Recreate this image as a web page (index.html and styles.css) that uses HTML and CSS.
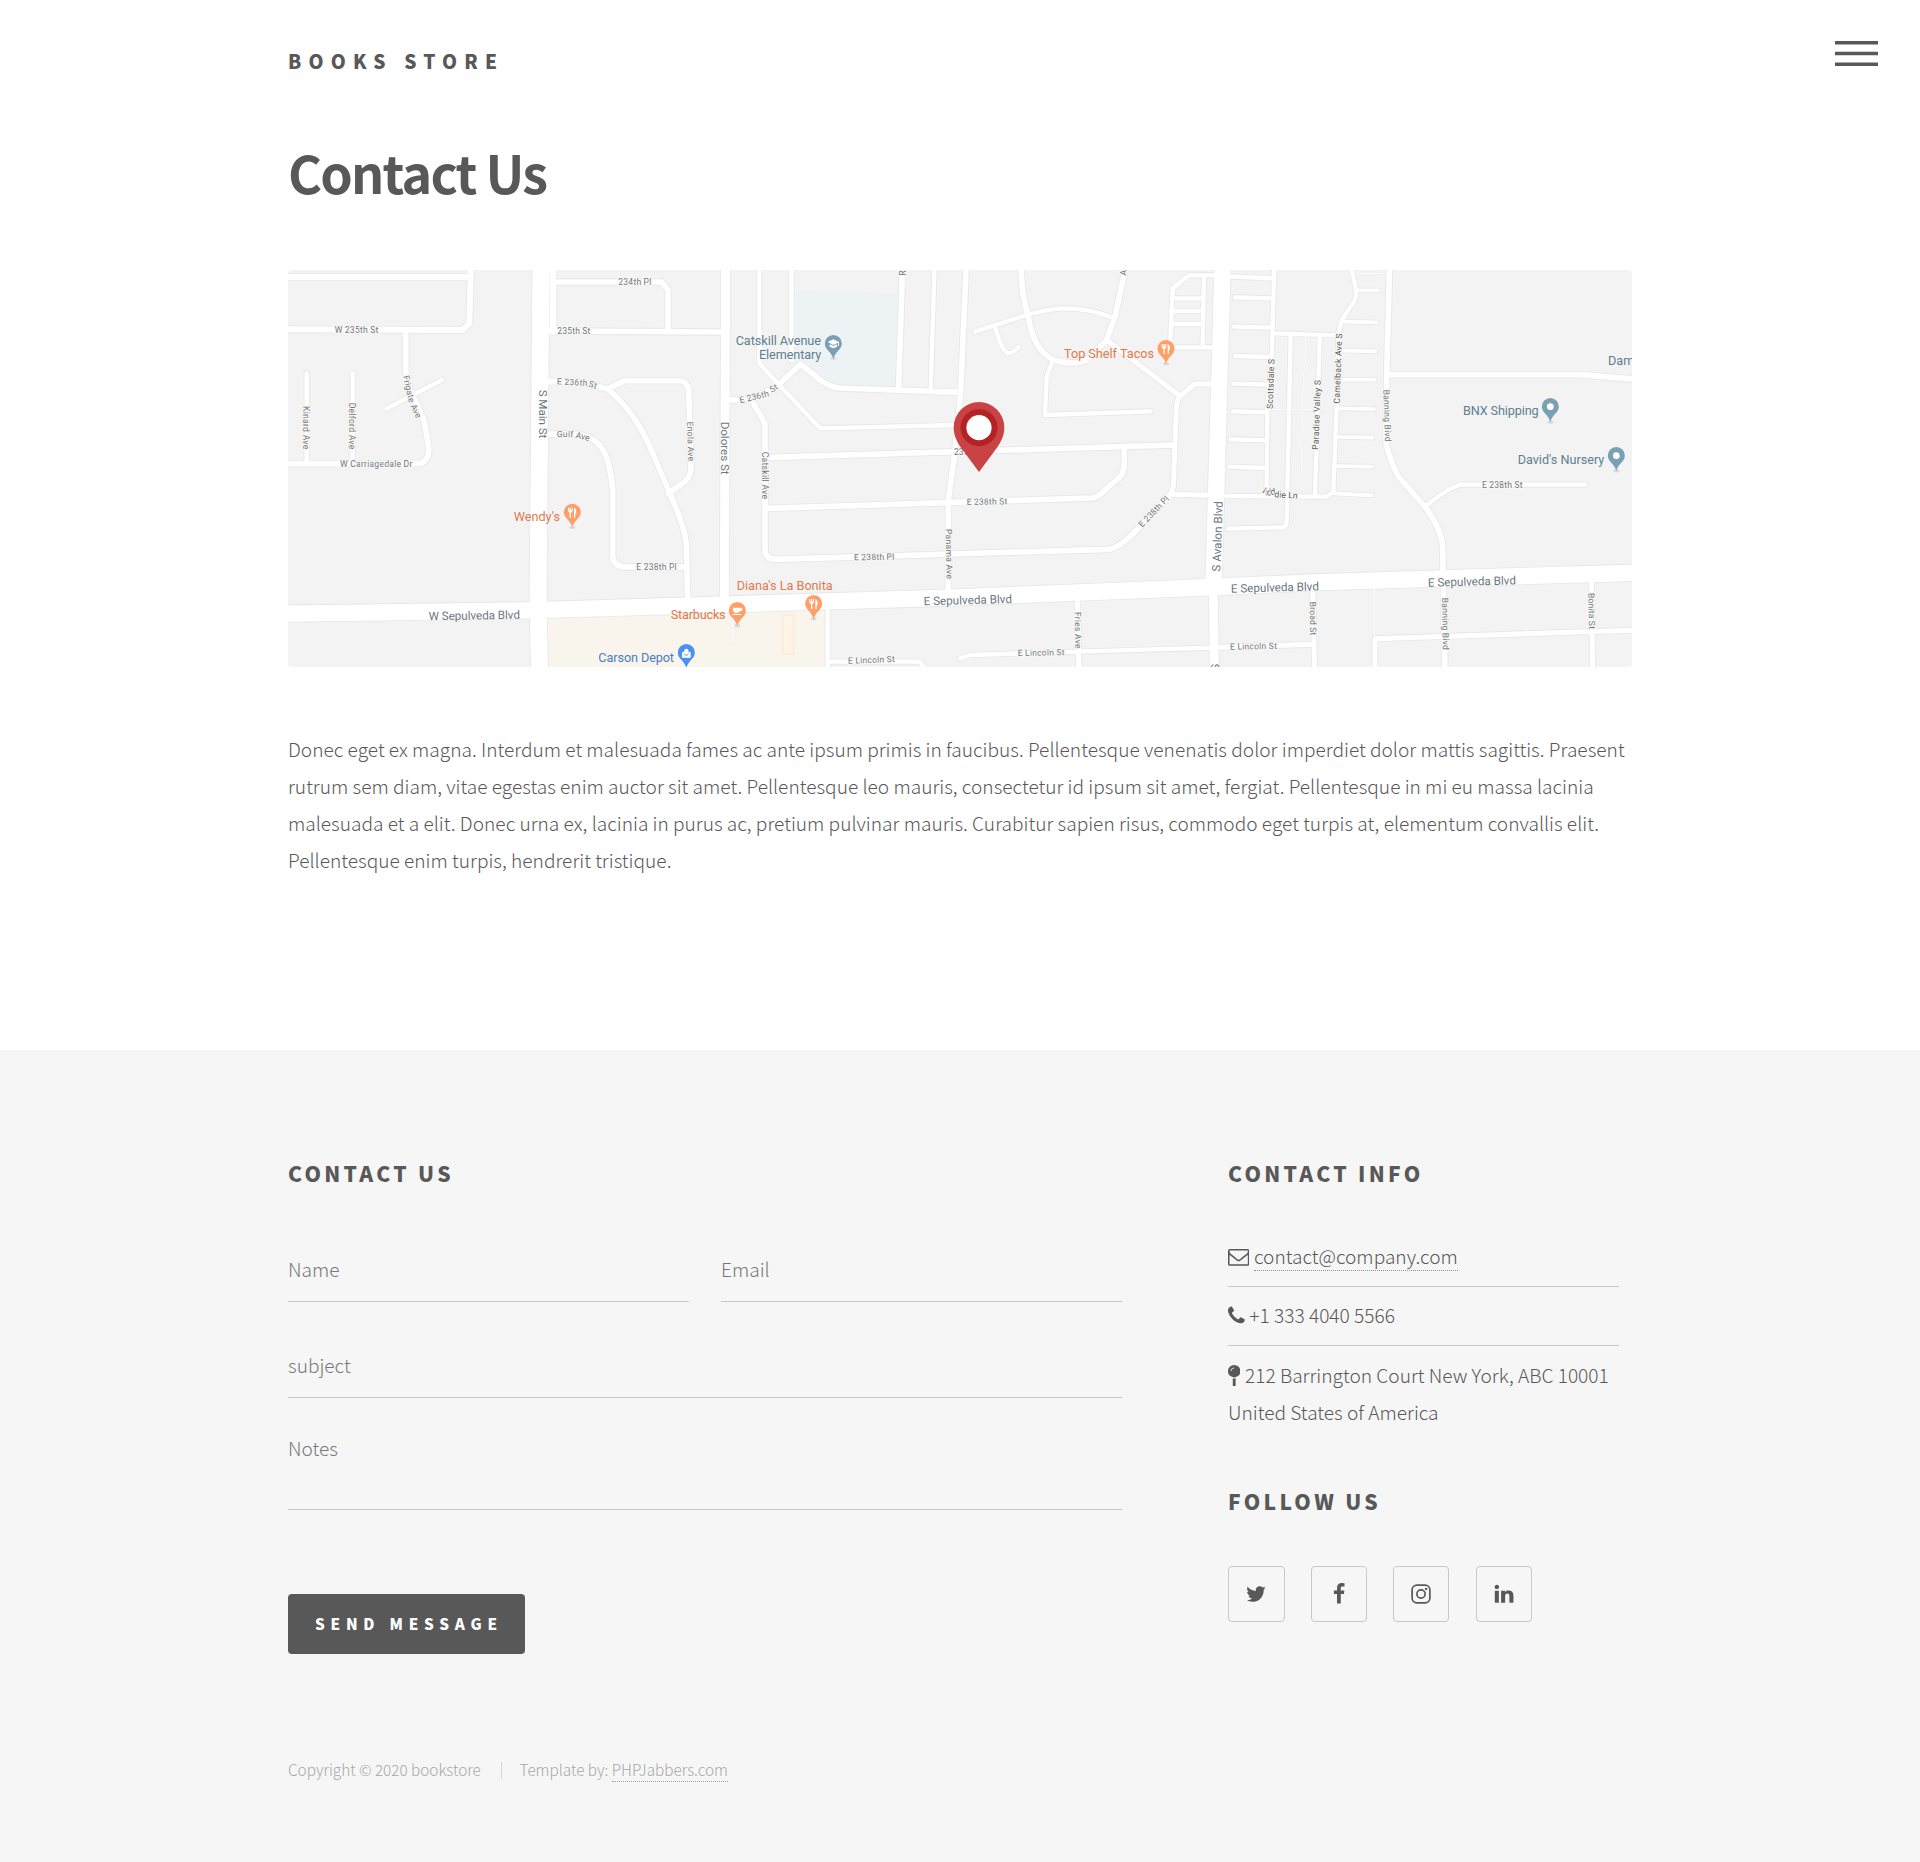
FILE: index.html
```html
<!DOCTYPE html>
<html lang="en">
<head>
<meta charset="utf-8">
<title>Books Store - Contact Us</title>
<link rel="stylesheet" href="styles.css">
</head>
<body>
<header class="header">
  <div class="inner header-inner"><a class="logo" href="#">BOOKS STORE</a></div>
  <button class="menu" aria-label="Menu">
    <svg width="43" height="26" viewBox="0 0 43 26"><path d="M0 1.7H43M0 12.5H43M0 23.3H43" stroke="#585858" stroke-width="3.4"/></svg>
  </button>
</header>
<main class="main inner">
  <h1>Contact Us</h1>
  <svg class="map" viewBox="288 270 1344 397" width="1344" height="397">
    <defs>
      <g id="roads">
        <g transform="translate(280 260) scale(.33333)">
          <path class="w18" d="M10 51H565M573 10L568 190L548 210L10 208"/>
          <path class="w16" d="M377 215V330Q380 370 400 410L432 480L446 560Q448 608 415 611H10"/>
          <path class="w12" d="M320 446L486 360M80 340V605M218 340V605"/>
          <path class="w52" d="M783 10L774 1030L779 1240"/>
          <path class="w20" d="M819 10V215"/>
          <path class="w16" d="M830 66H1145L1164 90V210M805 213L1330 216"/>
          <path class="w28" d="M1337 10L1333 1020"/>
          <path class="w16" d="M805 365H900L985 388Q1060 450 1110 560L1165 690Q1215 800 1219 850L1223 1020M985 385L1035 362H1200Q1222 365 1226 390L1230 520L1233 630Q1228 655 1215 665L1165 700M805 522H890Q950 530 975 580Q992 620 998 690V890Q1000 920 1035 921H1220"/>
          <path class="w50" d="M10 1061L750 1051L1350 1033L2010 1013L2730 984L3100 967L4070 938"/>
        </g>
        <g transform="translate(730 260) scale(.33333)">
          <path class="w12" d="M88 10V310L145 372L270 505L680 495M614 10L602 388"/>
          <path class="w14" d="M184 10V300"/>
          <path class="w16" d="M0 420Q80 420 145 375L212 312L270 360Q300 382 330 384L690 397M517 45L506 383"/>
          <path class="w16" d="M709 10L692 400L672 600L655 720V985"/>
          <path class="w16" d="M70 430L105 490V870Q106 897 135 898L1135 868Q1165 865 1215 815L1322 703M120 592L1330 555M112 745L1085 714Q1100 712 1115 700L1175 645Q1183 630 1183 600V565"/>
          <path class="w16" d="M873 10Q873 100 895 170Q910 270 970 300Q1030 318 1070 300L1130 240L1155 170L1182 45"/>
          <path class="w12" d="M735 215L890 165Q960 145 1000 145Q1080 145 1145 172M795 200Q815 275 835 280Q845 280 865 262M968 302L950 350L945 465L1262 454"/>
          <path class="w14" d="M1130 240L1350 408L1395 372Q1410 372 1445 372M1350 408Q1338 420 1338 480L1330 680L1322 703L1440 706"/>
          <path class="w12" d="M1455 46H1378L1328 85L1320 262H1445M1422 46L1418 262M1325 115H1415M1322 153H1415M1322 192H1415"/>
          <path class="w16" d="M1042 1020L1047 1240"/>
          <path class="w12" d="M300 1205H570L590 1235M690 1195L720 1185L1040 1175L1450 1163"/>
          <path class="w12" d="M293 1040V1240"/>
          <path class="w5" d="M10 1080V1150"/>
        </g>
        <g transform="translate(1180 260) scale(.33333)">
          <path class="w50" d="M128 10L101 960"/>
          <path class="w28" d="M100 960L103 1240"/>
          <path class="w12" d="M150 50L283 55M283 10L275 290L262 450L260 690M165 112L275 115M162 200L275 203M165 288L270 291M160 371L265 374M158 454L262 457M152 538L262 541M148 620L258 624"/>
          <path class="w12" d="M135 708L440 710L460 695L470 440L475 220L485 180L525 120Q535 90 508 10M283 220L475 226"/>
          <path class="w12" d="M332 228L320 790Q318 802 305 802L145 806M419 228L405 705"/>
          <path class="w3" d="M375 228L378 290L370 350L362 700M262 448H400M520 40H605V20M584 985V1130"/>
          <path class="w10" d="M530 91H595M490 185L590 187M488 272L588 274M480 359H585M470 445L582 447M470 531L578 533M465 618L576 620M460 700L574 706"/>
          <path class="w16" d="M629 10L620 350L618 550Q630 600 655 650L735 740Q785 810 788 860L795 1240M625 344H1200L1370 358"/>
          <path class="w12" d="M735 740Q820 672 850 674H1215"/>
          <path class="w14" d="M115 1162L400 1153M398 980L404 1240M585 1240V1136L1370 1110M1235 965L1238 1240"/>
        </g>
      </g>
      <g id="pin">
        <path d="M0 -52A25.500 25.500 0 0 1 25.500 -26C25.500 -8 6 -4 0 20C-6 -4 -25.500 -8 -25.500 -26A25.500 25.500 0 0 1 0 -52Z"/>
      </g>
      <path id="fork" d="M-13 -40V-31Q-12 -26 -8 -25V-10H-4V-25Q0 -26 1 -31V-40H-2V-32H-4V-40H-8V-32H-10V-40ZM5 -10V-40Q13 -37 12 -23H9V-10Z" fill="#fff"/>
    </defs>
    <rect x="288" y="270" width="1344" height="397" fill="#f3f3f3"/>
    <path fill="#edf2f5" d="M796 291L898 293L897 387L840 385L820 377L796 357Z"/>
    <path fill="#f9f5ed" d="M548 618L826 608V667H548Z"/>
    <use href="#roads" class="casing"/>
    <use href="#roads" class="surface"/>
    <path fill="#fef5e7" stroke="#f8e6cb" stroke-width=".8" d="M783 615H793.500V654H783Z"/>

    <g class="street" transform="translate(280 260) scale(.33333)">
      <text x="164" y="220" textLength="131">W 235th St</text>
      <text x="1015" y="76" textLength="99">234th Pl</text>
      <text x="832" y="221" textLength="99">235th St</text>
      <text x="180" y="621" textLength="217">W Carriagedale Dr</text>
      <text x="1069" y="931" textLength="121">E 238th Pl</text>
      <text transform="translate(830 373) rotate(3)" textLength="92">E 236th</text>
      <text transform="translate(924 379) rotate(17)" textLength="25">St</text>
      <text transform="translate(830 531) rotate(1)" textLength="50">Gulf</text>
      <text transform="translate(886 533) rotate(14)" textLength="42">Ave</text>
      <text transform="translate(70 438) rotate(90)" textLength="130">Kinard Ave</text>
      <text transform="translate(208 428) rotate(90)" textLength="140">Delford Ave</text>
      <text transform="translate(369 349) rotate(77)" textLength="82">Frigate</text>
      <text transform="translate(391 438) rotate(64)" textLength="42">Ave</text>
      <text transform="translate(1221 485) rotate(88)" textLength="119">Enola Ave</text>
      <g class="major">
        <text transform="translate(777 389) rotate(90)" textLength="146">S Main St</text>
        <text transform="translate(1323 485) rotate(90)" textLength="159">Dolores St</text>
        <text transform="translate(446 1081) rotate(-1)" textLength="274">W Sepulveda Blvd</text>
      </g>
    </g>
    <g class="street" transform="translate(730 260) scale(.33333)">
      <text transform="translate(31 430) rotate(-14)" textLength="90">E 236th</text>
      <text transform="translate(125 398) rotate(-30)" textLength="24">St</text>
      <text transform="translate(96 575) rotate(90)" textLength="142">Catskill Ave</text>
      <text transform="translate(647 807) rotate(89)" textLength="150">Panama Ave</text>
      <text transform="translate(710 735) rotate(-1)" textLength="122">E 238th St</text>
      <text transform="translate(372 901) rotate(-1)" textLength="121">E 238th Pl</text>
      <text transform="translate(1237 803) rotate(-46)" textLength="118">E 238th Pl</text>
      <text x="672" y="585">237th St</text>
      <text transform="translate(1034 1056) rotate(89)" textLength="110">Fries Ave</text>
      <text transform="translate(354 1211) rotate(-2)" textLength="141">E Lincoln St</text>
      <text transform="translate(863 1188) rotate(-1)" textLength="141">E Lincoln St</text>
      <text transform="translate(527 47) rotate(-90)">R</text>
      <text transform="translate(1188 47) rotate(-84)">A</text>
      <g class="major"><text transform="translate(581 1036) rotate(-1.500)" textLength="265">E Sepulveda Blvd</text></g>
    </g>
    <g class="street" transform="translate(1180 260) scale(.33333)">
      <g class="brown">
        <text transform="translate(278 447) rotate(-88)" textLength="150">Scottsdale S</text>
        <text transform="translate(415 570) rotate(-88)" textLength="210">Paradise Valley S</text>
        <text transform="translate(479 431) rotate(-88)" textLength="210">Camelback Ave S</text>
        <text transform="translate(245 697) rotate(35)">K</text>
        <text transform="translate(258 708) rotate(-10)" textLength="30">idd</text>
        <text transform="translate(283 712) rotate(3)" textLength="70">die Ln</text>
      </g>
      <text transform="translate(610 389) rotate(88)" textLength="156">Banning Blvd</text>
      <text transform="translate(786 1013) rotate(89)" textLength="157">Banning Blvd</text>
      <text x="906" y="683" textLength="122">E 238th St</text>
      <text transform="translate(389 1025) rotate(89)" textLength="101">Broad St</text>
      <text transform="translate(1225 999) rotate(89)" textLength="108">Bonita St</text>
      <text transform="translate(150 1169) rotate(-1)" textLength="141">E Lincoln St</text>
      <g class="major">
        <text transform="translate(121 935) rotate(-88)" textLength="211">S Avalon Blvd</text>
        <text transform="translate(153 998) rotate(-1.500)" textLength="264">E Sepulveda Blvd</text>
        <text transform="translate(744 980) rotate(-1.500)" textLength="264">E Sepulveda Blvd</text>
        <text transform="translate(118 1232) rotate(-90)">S</text>
      </g>
    </g>

    <g class="place" transform="translate(280 260) scale(.33333)">
      <g fill="#e07a4d">
        <text x="701" y="783" textLength="139">Wendy's</text>
        <text x="1172" y="1077" textLength="165">Starbucks</text>
        <text x="1370" y="991" textLength="288">Diana's La Bonita</text>
        <text x="2352" y="293" textLength="270">Top Shelf Tacos</text>
      </g>
      <text x="955" y="1205" textLength="227" fill="#4a7dc4">Carson Depot</text>
      <g fill="#5f7f90">
        <text x="1367" y="255" textLength="256">Catskill Avenue</text>
        <text x="1437" y="298" textLength="187">Elementary</text>
        <text x="3549" y="466" textLength="227">BNX Shipping</text>
        <text x="3713" y="612" textLength="260">David's Nursery</text>
        <text x="3984" y="314">Dam</text>
      </g>
      <g fill="#d9d9d9"><ellipse cx="877" cy="802" rx="9" ry="5"/><ellipse cx="1372" cy="1097" rx="9" ry="5"/><ellipse cx="1601" cy="1076" rx="9" ry="5"/><ellipse cx="2658" cy="311" rx="9" ry="5"/><ellipse cx="1660" cy="295" rx="9" ry="5"/><ellipse cx="3811" cy="486" rx="9" ry="5"/><ellipse cx="4009" cy="632" rx="9" ry="5"/></g>
      <g fill="#ff9e67">
        <use href="#pin" x="877" y="783"/><use href="#pin" x="1372" y="1078"/><use href="#pin" x="1601" y="1057"/><use href="#pin" x="2658" y="292"/>
      </g>
      <use href="#fork" x="877" y="783"/><use href="#fork" x="1601" y="1057"/><use href="#fork" x="2658" y="292"/>
      <path d="M1358 1043H1380Q1389 1043 1387 1050Q1385 1054 1379 1054Q1376 1059 1370 1059Q1358 1059 1358 1043ZM1357 1062H1384V1065H1357Z" fill="#fff"/>
      <g fill="#7aa0b4"><use href="#pin" x="1660" y="277"/><use href="#pin" x="3811" y="466"/><use href="#pin" x="4009" y="613"/></g>
      <path d="M1643 246L1660 238L1677 246V257H1674V248L1660 255ZM1649 253L1660 258L1671 253V260L1660 265L1649 260Z" fill="#fff"/>
      <circle cx="3811" cy="440" r="10" fill="#fff"/><circle cx="4009" cy="587" r="10" fill="#fff"/>
      <use href="#pin" x="1219" y="1204" fill="#4a90f5"/>
      <path d="M1206 1176H1232V1193H1206ZM1212 1176Q1212 1166 1219 1166Q1226 1166 1226 1176" fill="#fff"/>
      <path d="M1212 1181Q1219 1191 1226 1181" fill="none" stroke="#4a90f5" stroke-width="3"/>
    </g>
    <path fill="#c94244" d="M979 402A25.300 25.300 0 0 1 1004.300 427.500C1004.300 436 1001 442 996 449L979 472L962 449C957 442 953.700 436 953.700 427.500A25.300 25.300 0 0 1 979 402Z"/>
    <circle cx="979" cy="427.700" r="18.500" fill="#b52226"/>
    <circle cx="979" cy="427.700" r="12.600" fill="#fff"/>
  </svg>
  <p class="intro">Donec eget ex magna. Interdum et malesuada fames ac ante ipsum primis in faucibus. Pellentesque venenatis dolor imperdiet dolor mattis sagittis. Praesent rutrum sem diam, vitae egestas enim auctor sit amet. Pellentesque leo mauris, consectetur id ipsum sit amet, fergiat. Pellentesque in mi eu massa lacinia malesuada et a elit. Donec urna ex, lacinia in purus ac, pretium pulvinar mauris. Curabitur sapien risus, commodo eget turpis at, elementum convallis elit. Pellentesque enim turpis, hendrerit tristique.</p>
</main>
<footer class="footer">
  <div class="inner footer-grid">
    <section class="contact">
      <h2>CONTACT US</h2>
      <form class="form">
        <div class="row">
          <input type="text" placeholder="Name">
          <input type="email" placeholder="Email">
        </div>
        <input type="text" placeholder="subject">
        <textarea placeholder="Notes"></textarea>
        <button type="button" class="send">SEND MESSAGE</button>
      </form>
    </section>
    <section class="info">
      <h2>CONTACT INFO</h2>
      <ul class="list">
        <li><svg class="ico" width="21.330" height="21.330" viewBox="0 0 1792 1792"><path d="M1664 1504v-768q-32 36-69 66-268 206-426 338-51 43-83 67t-86.500 48.500-102.500 24.500h-2q-48 0-102.500-24.500t-86.500-48.500-83-67q-158-132-426-338-37-30-69-66v768q0 13 9.500 22.500t22.500 9.500h1472q13 0 22.500-9.500t9.500-22.500zm0-1051v-24.500l-.5-13-3-12.500-5.500-9-9-7.500-14-2.500h-1472q-13 0-22.500 9.500t-9.500 22.500q0 168 147 284 193 152 401 317 6 5 35 29.500t46 37.500 44.500 31.500 50.500 27.500 43 9h2q20 0 43-9t50.500-27.500 44.500-31.500 46-37.500 35-29.500q208-165 401-317 54-43 100.500-115.500t46.500-131.500zm128-37v1088q0 66-47 113t-113 47h-1472q-66 0-113-47t-47-113v-1088q0-66 47-113t113-47h1472q66 0 113 47t47 113z"/></svg><a class="mail" href="#">contact@company.com</a></li>
        <li><svg class="ico" width="16.760" height="21.330" viewBox="192 0 1408 1792"><path d="M1600 1240q0 27-10 70.500t-21 68.500q-21 50-122 106-94 51-186 51-27 0-53-3.500t-57.500-12.500-47-14.500-55.500-20.500-49-18q-98-35-175-83-127-79-264-216t-216-264q-48-77-83-175-3-9-18-49t-20.500-55.500-14.500-47-12.500-57.500-3.500-53q0-92 51-186 56-101 106-122 25-11 68.500-21t70.500-10q14 0 21 3 18 6 53 76 11 19 30 54t35 63.500 31 53.500q3 4 17.500 25t21.500 35.500 7 28.500q0 20-28.500 50t-62 55-62 53-28.500 46q0 9 5 22.500t8.500 20.500 14 24 11.500 19q76 137 174 235t235 174q2 1 19 11.500t24 14 20.500 8.500 22.500 5q18 0 46-28.500t53-62 55-62 50-28.500q14 0 28.500 7t35.500 21.500 25 17.500q25 15 53.500 31t63.500 35 54 30q70 35 76 53 3 7 3 21z"/></svg><span>+1 333 4040 5566</span></li>
        <li><svg class="ico" width="12.400" height="21.330" viewBox="0 0 12.400 21.330"><circle cx="6.200" cy="6.200" r="6.200"/><path d="M4.800 13.300Q6.200 13.600 7.600 13.300V21.300H4.800Z"/><path d="M2.900 6.200Q2.900 3 6.200 2.900" fill="none" stroke="#f6f6f6" stroke-width=".8"/></svg><span>212 Barrington Court New York, ABC 10001</span><br><span>United States of America</span></li>
      </ul>
      <h2 class="h-follow">FOLLOW US</h2>
      <div class="social">
        <a href="#" aria-label="Twitter"><svg width="22" height="22" viewBox="0 0 1792 1792"><path d="M1684 408q-67 98-162 167 1 14 1 42 0 130-38 259.500t-115.500 248.500-184.500 210.500-258 146-323 54.500q-271 0-496-145 35 4 78 4 225 0 401-138-105-2-188-64.500t-114-159.500q33 5 61 5 43 0 85-11-112-23-185.500-111.500t-73.500-205.500v-4q68 38 146 41-66-44-105-115t-39-154q0-88 44-163 121 149 294.500 238.500t371.500 99.500q-8-38-8-74 0-134 94.500-228.500t228.500-94.500q140 0 236 102 109-21 205-78-37 115-142 178 93-10 186-50z"/></svg></a>
        <a href="#" aria-label="Facebook"><svg width="22" height="22" viewBox="0 0 1792 1792"><path d="M1343 12v264h-157q-86 0-116 36t-30 108v189h293l-39 296h-254v759h-306v-759h-255v-296h255v-218q0-186 104-288.500t277-102.500q147 0 228 12z"/></svg></a>
        <a href="#" aria-label="Instagram"><svg width="22" height="22" viewBox="0 0 22 22"><g fill="none" stroke="#585858" stroke-width="1.700"><rect x="2.100" y="2.100" width="17.800" height="17.800" rx="4.800"/><circle cx="11" cy="11" r="4.100"/></g><circle cx="16.100" cy="5.900" r="1.200"/></svg></a>
        <a href="#" aria-label="LinkedIn"><svg width="22" height="22" viewBox="0 0 1792 1792"><path d="M477 625v991h-330v-991h330zm21-306q1 73-50.500 122t-135.500 49h-2q-82 0-132-49t-50-122q0-74 51.500-122.500t134.500-48.500 133 48.500 51 122.500zm1166 729v568h-329v-530q0-105-40.500-164.500t-126.500-59.500q-63 0-105.500 34.500t-63.500 85.500q-11 30-11 81v553h-329q2-399 2-647t-1-296l-1-48h329v144h-2q20-32 41-56t56.500-52 87-43.500 114.500-15.500q171 0 275 113.500t104 332.500z"/></svg></a>
      </div>
    </section>
  </div>
  <div class="inner copyright"><span class="copy">Copyright © 2020 bookstore</span><span class="credit">Template by: <a href="#">PHPJabbers.com</a></span></div>
</footer>
</body>
</html>
```
FILE: styles.css
```css
*{box-sizing:border-box}
body{margin:0;background:#fff;color:#585858;font-family:"Noto Sans CJK SC","Open Sans",sans-serif;font-weight:300;font-size:19.12px;line-height:37px}
a{color:inherit;text-decoration:none}
h1,h2{margin:0}
.inner{width:1344px;margin:0 auto}
.header{position:relative;padding-top:43px;height:142px}
.header-inner{display:flex}
.logo{font-weight:900;letter-spacing:7.2px}
.menu{position:absolute;right:42px;top:41px;width:43px;height:26px;padding:0;border:0;background:none}
.menu svg{display:block}
.main{height:908px}
h1{font-size:52px;line-height:60px;font-weight:700;letter-spacing:-1.8px}
.map{display:block;margin-top:68px;border-radius:4px}
.intro{margin:64px 0 0;letter-spacing:.006px}

.casing,.surface{fill:none;stroke-linejoin:round;stroke-linecap:round}
.casing{stroke:#e7e7e7;--edge:5px}
.surface{stroke:#fff;--edge:0px}
.w3{stroke-width:calc(3px + var(--edge) * .4)}
.w5{stroke-width:calc(5px + var(--edge) * .4)}
.w10{stroke-width:calc(11px + var(--edge))}
.w12{stroke-width:calc(13px + var(--edge))}
.w14{stroke-width:calc(15px + var(--edge))}
.w16{stroke-width:calc(17px + var(--edge))}
.w18{stroke-width:calc(18px + var(--edge))}
.w20{stroke-width:calc(20px + var(--edge))}
.w28{stroke-width:calc(27px + var(--edge))}
.w50{stroke-width:calc(49px + var(--edge))}
.w52{stroke-width:calc(51px + var(--edge))}
.street,.place{font-family:Roboto,sans-serif;font-weight:400;line-height:1}
.street{font-size:26px;fill:#74787b;stroke:#f8f8f8;stroke-width:6px;paint-order:stroke}
.major{font-size:35px;fill:#6b777f;stroke:none}
.brown{fill:#5c584c}
.place{font-size:38px}

.footer{background:#f6f6f6;height:812px;padding-top:108px}
.footer-grid{display:flex;height:599px}
.contact{width:834px;margin-right:106px}
.info{width:391px}
h2{font-size:21px;line-height:30px;font-weight:900;letter-spacing:3.3px}
.form{margin-top:47px;display:flex;flex-direction:column}
.row{display:flex;gap:32px;margin-bottom:29px}
input,textarea{display:block;width:100%;height:67px;padding:2px 0 0;margin:0;border:0;border-bottom:1px solid #c8c8c8;border-radius:0;background:transparent;color:inherit;font:inherit;outline:0;resize:none}
textarea{margin-top:31px;height:81px;padding-top:1px;overflow:hidden}
::placeholder{color:#585858;opacity:.8}
.send{align-self:flex-start;margin-top:84px;width:237px;height:60px;padding:0 0 1px 27px;border:0;border-radius:4px;background:#585858;color:#fff;font:900 15.3px/59px "Noto Sans CJK SC",sans-serif;letter-spacing:5.75px;text-align:left;white-space:nowrap}
.list{list-style:none;margin:40px 0 0;padding:0}
.list li{padding:10px 0 11px;border-bottom:1px solid #c8c8c8;white-space:nowrap}
.list li:last-child{border:0;padding-top:11px}
.ico{vertical-align:-3px;margin-right:4.6px;fill:#585858}
.mail{border-bottom:1px dotted #909090}
.h-follow{margin-top:44px}
.social{display:flex;gap:26.330px;margin-top:50px}
.social a{width:56px;height:56px;border:1px solid #c8c8c8;border-radius:4px;display:flex;align-items:center;justify-content:center}
.social a:first-child{width:56.6px}
.social svg{fill:#585858}
.copyright{display:flex;font-size:15.3px;line-height:24px;color:#a7a7a7}
.copy{width:213px;white-space:nowrap}
.credit{position:relative;padding-left:18.500px;white-space:nowrap}
.credit::before{content:"";position:absolute;left:0;top:5px;width:1px;height:17px;background:#d6d6d6}
.credit a{border-bottom:1px dotted #a0a0a0;padding-bottom:1px}
```
